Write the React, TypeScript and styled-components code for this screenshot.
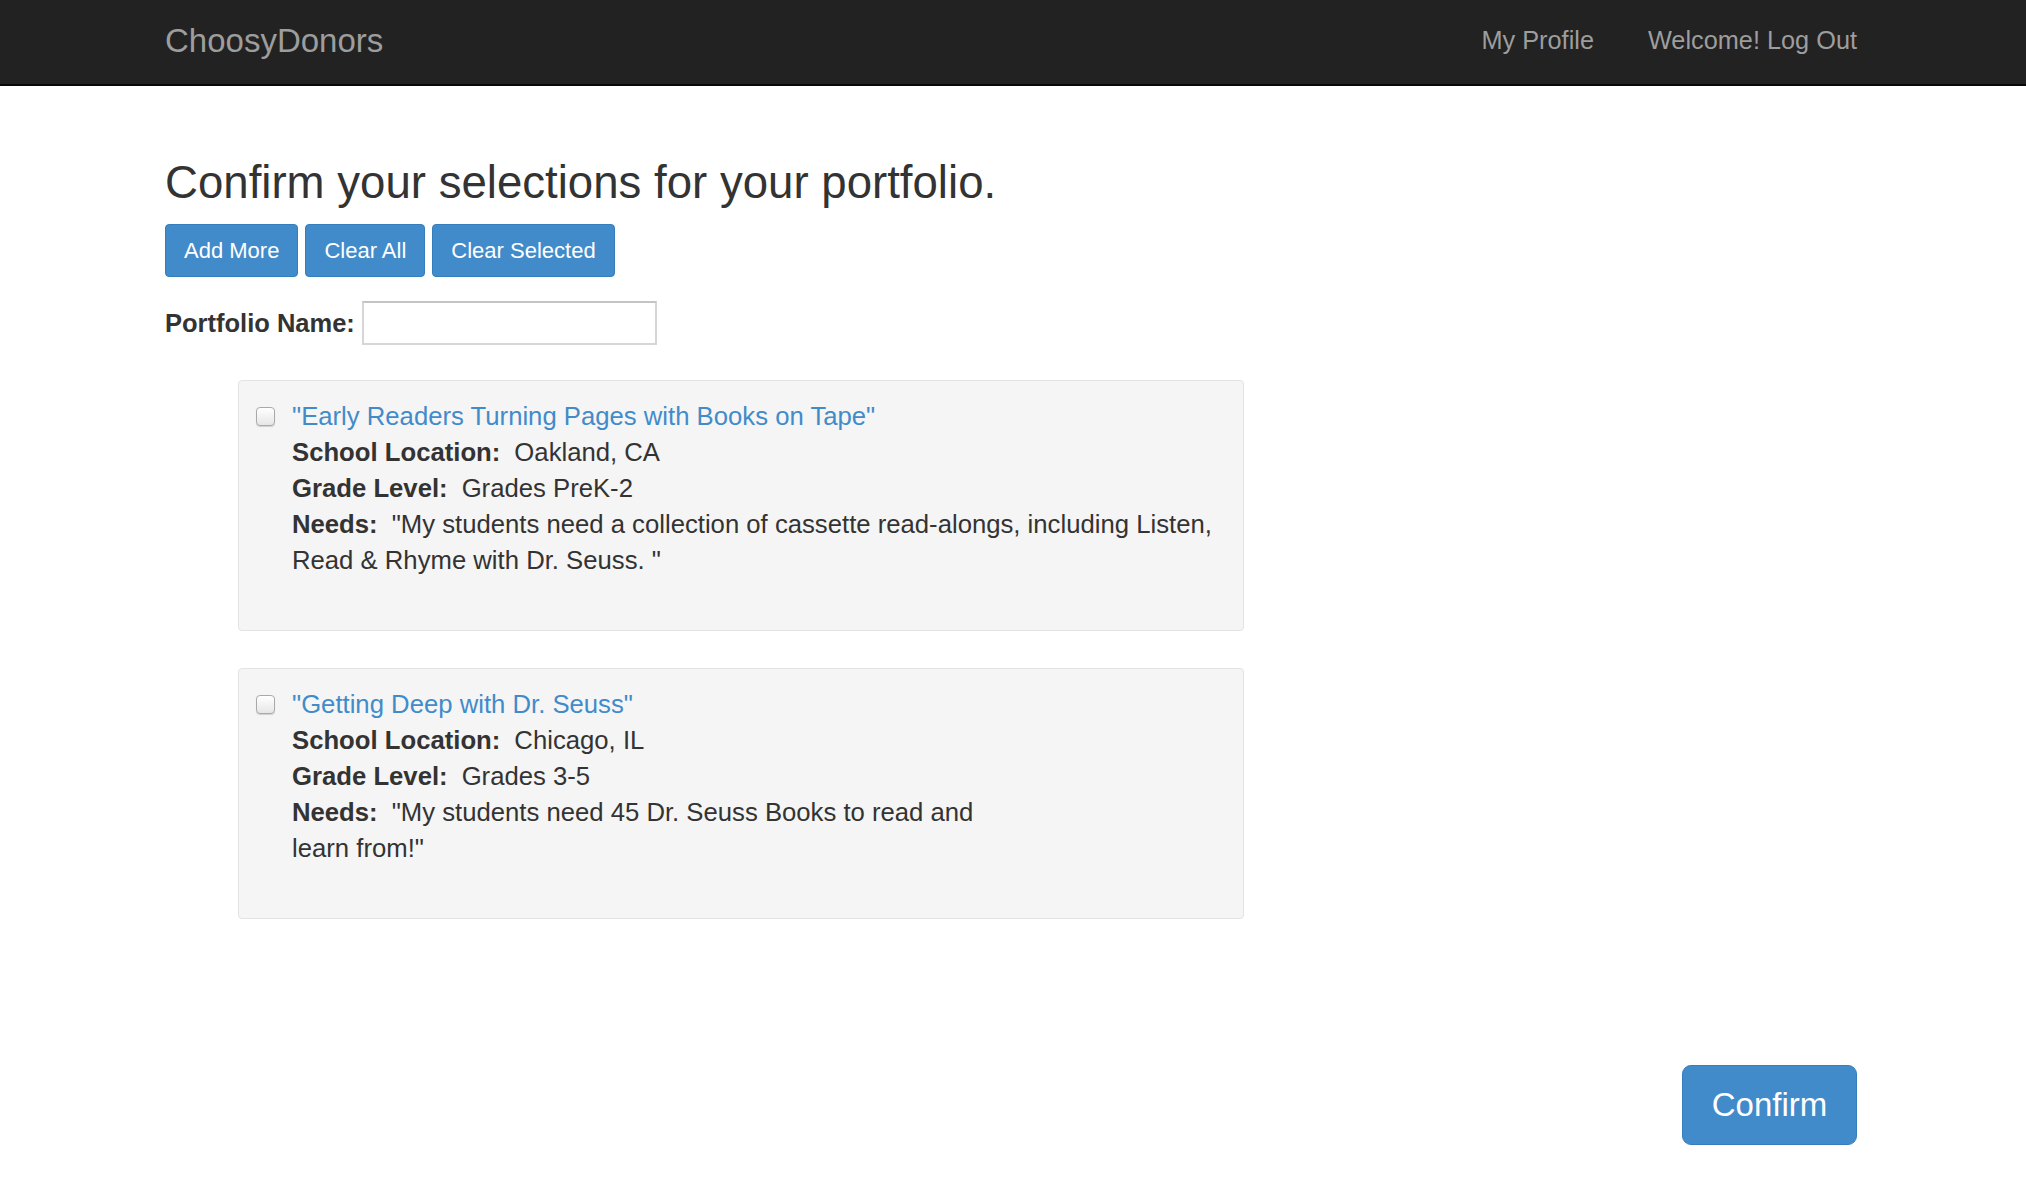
import React from 'react'
import styled, { createGlobalStyle } from 'styled-components'

const GlobalStyle = createGlobalStyle`
  body {
    margin: 0;
    background: #ffffff;
    font-family: "Liberation Sans", Arial, Helvetica, sans-serif;
    color: #333333;
  }
`

const Navbar = styled.nav`
  height: 84px;
  background: #222222;
  border-bottom: 2px solid #080808;
`

const Container = styled.div`
  width: 1692px;
  margin: 0 0 0 165px;
`

const NavInner = styled(Container)`
  display: flex;
  align-items: center;
  justify-content: space-between;
  height: 100%;
`

const Brand = styled.a`
  font-size: 33px;
  color: #9d9d9d;
  text-decoration: none;
  margin-top: -2px;
`

const NavLinks = styled.div`
  display: flex;
  gap: 54px;
  margin-top: -4px;
`

const NavLink = styled.a`
  font-size: 25.3px;
  color: #9d9d9d;
  text-decoration: none;
`

const Heading = styled.h1`
  font-size: 45.6px;
  font-weight: normal;
  line-height: 1.1;
  margin: 72px 0 0;
  color: #333333;
`

const ButtonRow = styled.div`
  display: flex;
  gap: 7px;
  margin-top: 16px;
`

const Button = styled.button<{ $big?: boolean }>`
  display: inline-flex;
  align-items: center;
  justify-content: center;
  height: ${p => (p.$big ? '80px' : '53px')};
  min-width: ${p => (p.$big ? '175px' : '0')};
  padding: 0 ${p => (p.$big ? '28px' : '18px')};
  font-family: inherit;
  font-size: ${p => (p.$big ? '33px' : '22px')};
  color: #ffffff;
  background: #428bca;
  border: 1px solid #357ebd;
  border-radius: ${p => (p.$big ? '9px' : '4px')};
  cursor: pointer;
`

const NameRow = styled.div`
  display: flex;
  align-items: center;
  gap: 7px;
  margin-top: 24px;
`

const Label = styled.label`
  font-size: 25.5px;
  font-weight: bold;
`

const TextInput = styled.input`
  width: 295px;
  height: 44px;
  box-sizing: border-box;
  border: 2px solid #d6d6d6;
  border-top-color: #c4c4c4;
  background: #ffffff;
  outline: none;
`

const CardList = styled.div`
  display: flex;
  flex-direction: column;
  gap: 37px;
  width: 1006px;
  margin: 35px 0 0 73px;
`

const Card = styled.div`
  display: flex;
  gap: 17px;
  min-height: 251px;
  box-sizing: border-box;
  padding: 17px 18px 40px 17px;
  background: #f5f5f5;
  border: 1px solid #e3e3e3;
  border-radius: 4px;
`

const Check = styled.input`
  appearance: none;
  flex: none;
  width: 19px;
  height: 19px;
  margin: 9px 0 0;
  border: 1px solid #a9a9a9;
  border-radius: 4px;
  background: linear-gradient(#ffffff, #e6e6e6);
  box-shadow: 0 1px 1px rgba(0, 0, 0, 0.15);
`

const Body = styled.div`
  font-size: 25.7px;
  line-height: 36px;
`

const Title = styled.a`
  color: #428bca;
  text-decoration: none;
`

const Field = styled.div``

const FieldName = styled.b`
  margin-right: 14px;
`

const Footer = styled.div`
  display: flex;
  justify-content: flex-end;
  margin-top: 146px;
`

type Project = {
  title: string
  location: string
  grade: string
  needs: React.ReactNode
}

const projects: Project[] = [
  {
    title: 'Early Readers Turning Pages with Books on Tape',
    location: 'Oakland, CA',
    grade: 'Grades PreK-2',
    needs: '"My students need a collection of cassette read-alongs, including Listen, Read & Rhyme with Dr. Seuss. "'
  },
  {
    title: 'Getting Deep with Dr. Seuss',
    location: 'Chicago, IL',
    grade: 'Grades 3-5',
    needs: (
      <>
        "My students need 45 Dr. Seuss Books to read and
        <br />
        learn from!"
      </>
    )
  }
]

const App = () => (
  <>
    <GlobalStyle />
    <Navbar>
      <NavInner>
        <Brand href="#">ChoosyDonors</Brand>
        <NavLinks>
          <NavLink href="#">My Profile</NavLink>
          <NavLink href="#">Welcome! Log Out</NavLink>
        </NavLinks>
      </NavInner>
    </Navbar>
    <Container>
      <Heading>Confirm your selections for your portfolio.</Heading>
      <ButtonRow>
        <Button>Add More</Button>
        <Button>Clear All</Button>
        <Button>Clear Selected</Button>
      </ButtonRow>
      <NameRow>
        <Label htmlFor="pname">Portfolio Name:</Label>
        <TextInput id="pname" type="text" />
      </NameRow>
      <CardList>
        {projects.map(p => (
          <Card key={p.title}>
            <Check type="checkbox" aria-label={p.title} />
            <Body>
              <Title href="#">"{p.title}"</Title>
              <Field>
                <FieldName>School Location:</FieldName>
                {p.location}
              </Field>
              <Field>
                <FieldName>Grade Level:</FieldName>
                {p.grade}
              </Field>
              <Field>
                <FieldName>Needs:</FieldName>
                {p.needs}
              </Field>
            </Body>
          </Card>
        ))}
      </CardList>
      <Footer>
        <Button $big>Confirm</Button>
      </Footer>
    </Container>
  </>
)

export default App
